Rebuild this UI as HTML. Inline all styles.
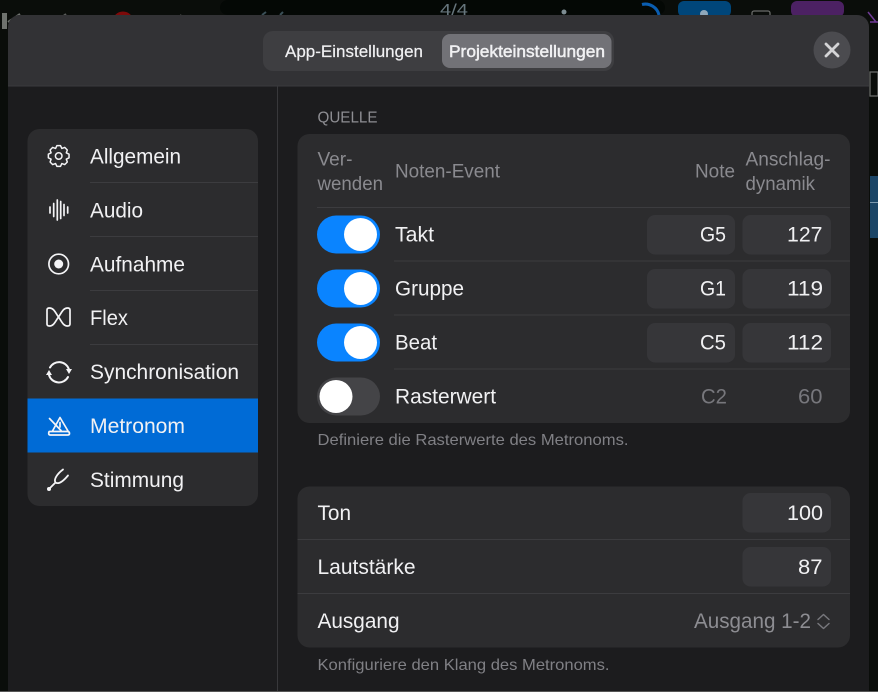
<!DOCTYPE html>
<html lang="de"><head><meta charset="utf-8"><title>Metronom</title>
<style>
html,body{margin:0;padding:0;background:#0a0d0a;width:878px;height:692px;overflow:hidden}
svg{display:block}
text{font-family:"Liberation Sans",Arial,sans-serif;font-size:21px;fill:#f1f1f3}
.g{fill:#8a8a8f;font-size:19px}
.f{fill:#808085;font-size:16px}
.d{fill:#77777c}
.ic{fill:none;stroke:#f4f4f6;stroke-width:1.700;stroke-linecap:round;stroke-linejoin:round}
.sep{stroke:#3c3c3f;stroke-width:1}
</style></head><body>
<svg width="878" height="692" viewBox="0 0 878 692" xmlns="http://www.w3.org/2000/svg">
<rect width="878" height="692" fill="#0a0d0a"/>
<!-- background app toolbar -->
<rect x="2" y="13" width="5" height="16" fill="#6f726e"/>
<path d="M8 22 L20 14" stroke="#6f726e" stroke-width="2" fill="none"/>
<path d="M58 20 L66 14" stroke="#5a5c5a" stroke-width="2" fill="none"/>
<circle cx="123" cy="22" r="10.500" fill="#7d0a0a"/>
<path d="M180 15 L188 21" stroke="#5a5c5a" stroke-width="2" fill="none"/>
<rect x="220" y="0" width="445" height="15" rx="8" fill="#040805"/>
<path d="M262 15 L266 12 M280 15 L283 12" stroke="#3a4f57" stroke-width="2"/>
<text x="440" y="15" style="font-size:16px;fill:#66757c" textLength="28" lengthAdjust="spacingAndGlyphs">4/4</text>
<circle cx="564" cy="12" r="2.500" fill="#7d8c92"/>
<path d="M642 4.500 A14 14 0 0 1 659 15" stroke="#0a5db0" stroke-width="3" fill="none"/>
<rect x="678" y="1" width="53" height="16" rx="6" fill="#00467a"/>
<circle cx="704" cy="14" r="4" fill="#8fa8bb"/>
<rect x="752" y="11" width="18" height="8" rx="2" fill="none" stroke="#6a6c6a" stroke-width="1.300"/>
<rect x="791" y="1" width="53" height="16" rx="6" fill="#4c2163"/>
<path d="M868 12 L876 22 M870 22 H878" stroke="#6f3a96" stroke-width="1.500" fill="none"/>
<rect x="870" y="72" width="8" height="24" fill="none" stroke="#6a6c6a" stroke-width="1.300"/>
<rect x="870" y="176" width="8" height="62" fill="#1b4566"/>
<rect x="870" y="202" width="8" height="1" fill="#7b98ad"/>
<!-- modal -->
<path d="M8 691V27a12 12 0 0 1 12-12H857a12 12 0 0 1 12 12V691Z" fill="#1c1c1e"/>
<path d="M8 85.500V27a12 12 0 0 1 12-12H857a12 12 0 0 1 12 12V85.500Z" fill="#323235"/>
<rect x="8" y="85.500" width="861" height="1" fill="#3a3a3d"/>
<rect x="277" y="86" width="1" height="605" fill="#38383b"/>
<rect x="0" y="691" width="878" height="1" fill="#565656"/>
<!-- segmented -->
<rect x="263" y="31" width="351" height="40" rx="10" fill="#3e3e41"/>
<rect x="442" y="34" width="169.500" height="34" rx="8" fill="#727277"/>
<text x="285" y="57" style="font-size:17px;stroke:#f1f1f3;stroke-width:.2" textLength="138" lengthAdjust="spacingAndGlyphs">App-Einstellungen</text>
<text x="449" y="57" style="font-size:17px;stroke:#f1f1f3;stroke-width:.5" textLength="156" lengthAdjust="spacingAndGlyphs">Projekteinstellungen</text>
<circle cx="832" cy="50" r="18.500" fill="#4b4b4f"/>
<path d="M826 44 L838 56 M838 44 L826 56" stroke="#d4d4d6" stroke-width="2.800" stroke-linecap="round"/>
<!-- sidebar -->
<rect x="27.500" y="129" width="230.500" height="377" rx="12" fill="#2c2c2e"/>
<path d="M27.500 398.500H258V452.500H27.500Z" fill="#006bd6"/>
<path class="sep" d="M90 182.500H258M90 236.500H258M90 290.500H258M90 344.500H258"/>
<g transform="translate(58.700 156)" class="ic" style="stroke-width:1.500">
<path d="M-1.820-10.340L1.820-10.340L3.140-7.580L6.020-8.600L8.600-6.020L7.580-3.140L10.340-1.820L10.340 1.820L7.580 3.140L8.600 6.020L6.020 8.600L3.140 7.580L1.820 10.340L-1.820 10.340L-3.140 7.580L-6.020 8.600L-8.600 6.020L-7.580 3.140L-10.340 1.820L-10.340-1.820L-7.580-3.140L-8.600-6.020L-6.020-8.600L-3.140-7.580Z"/>
<circle r="3.300"/>
</g>
<path class="ic" d="M50 207V213M53.700 203.500V216.500M57.300 200V220M60.700 201.500V218.500M64 204.500V215.500M67.700 207V213"/>
<circle cx="58.700" cy="264" r="9.800" class="ic" style="stroke-width:1.700"/>
<circle cx="58.700" cy="264" r="4.500" fill="#f4f4f6"/>
<path class="ic" d="M47 310Q47 308 49.500 308C54 308 55.500 313 58.500 317C61.500 321 63 326 67.500 326Q70 326 70 324V310Q70 308 67.500 308C63 308 61.500 313 58.500 317C55.500 321 54 326 49.500 326Q47 326 47 324Z"/>
<path class="ic" style="stroke-width:2" d="M50 367.500A10.300 10.300 0 0 1 68.800 369M68 377A10.300 10.300 0 0 1 49 375"/>
<path fill="#f4f4f6" d="M66 369H72L69 374ZM46 375H52L49 370Z"/>
<path class="ic" d="M52.500 431L60 417.500L68 431M49.500 431.500H67.500Q69.500 431.500 69.500 433.500Q69.500 435 67.500 435H50.500Q48.700 435 48.700 433.500Q48.700 431.500 49.500 431.500ZM49.500 418.500L61 430.500M60 422.500V427"/>
<path class="ic" style="stroke-width:1.800" d="M49 489L55.500 482.500C53.500 479.500 57 474 63 469.500M55.500 482.500C58.500 484.500 63 481.500 68 475.500"/>
<circle cx="49" cy="489" r="2" fill="#f4f4f6"/>
<text x="90" y="163.500" textLength="91" lengthAdjust="spacingAndGlyphs">Allgemein</text>
<text x="90" y="217.500" textLength="53" lengthAdjust="spacingAndGlyphs">Audio</text>
<text x="90" y="271.500" textLength="95" lengthAdjust="spacingAndGlyphs">Aufnahme</text>
<text x="90" y="325" textLength="38" lengthAdjust="spacingAndGlyphs">Flex</text>
<text x="90" y="379" textLength="149" lengthAdjust="spacingAndGlyphs">Synchronisation</text>
<text x="90" y="433" textLength="95" lengthAdjust="spacingAndGlyphs">Metronom</text>
<text x="90" y="487" textLength="94" lengthAdjust="spacingAndGlyphs">Stimmung</text>
<!-- card 1 -->
<text x="317.500" y="122.500" style="font-size:16px;fill:#8e8e93" textLength="60" lengthAdjust="spacingAndGlyphs">QUELLE</text>
<rect x="297.500" y="134" width="552.500" height="289" rx="12" fill="#2c2c2e"/>
<path class="sep" d="M317 207.500H850M394 261H850M394 315H850M394 369H850"/>
<text class="g" x="317.500" y="165.500" textLength="35" lengthAdjust="spacingAndGlyphs">Ver-</text>
<text class="g" x="317.500" y="190" textLength="65.500" lengthAdjust="spacingAndGlyphs">wenden</text>
<text class="g" x="395" y="177.500" textLength="105" lengthAdjust="spacingAndGlyphs">Noten-Event</text>
<text class="g" x="695" y="177.500" textLength="40" lengthAdjust="spacingAndGlyphs">Note</text>
<text class="g" x="745.500" y="165.500" textLength="85" lengthAdjust="spacingAndGlyphs">Anschlag-</text>
<text class="g" x="745.500" y="190" textLength="69.500" lengthAdjust="spacingAndGlyphs">dynamik</text>
<!-- toggles -->
<rect x="317" y="215.500" width="63" height="38" rx="19" fill="#0a84ff"/><circle cx="360.500" cy="234.500" r="16.500" fill="#fff"/>
<rect x="317" y="269.500" width="63" height="38" rx="19" fill="#0a84ff"/><circle cx="360.500" cy="288.500" r="16.500" fill="#fff"/>
<rect x="317" y="323.500" width="63" height="38" rx="19" fill="#0a84ff"/><circle cx="360.500" cy="342.500" r="16.500" fill="#fff"/>
<rect x="317" y="377.500" width="63" height="38" rx="19" fill="#444447"/><circle cx="336" cy="396.500" r="16.500" fill="#fff"/>
<text x="395" y="241.500" textLength="39" lengthAdjust="spacingAndGlyphs">Takt</text>
<text x="395" y="295.500" textLength="69" lengthAdjust="spacingAndGlyphs">Gruppe</text>
<text x="395" y="349.500" textLength="42" lengthAdjust="spacingAndGlyphs">Beat</text>
<text x="395" y="403.500" textLength="101" lengthAdjust="spacingAndGlyphs">Rasterwert</text>
<!-- inputs -->
<g fill="#363639">
<rect x="647" y="215" width="88" height="39.500" rx="8"/><rect x="742.500" y="215" width="88.500" height="39.500" rx="8"/>
<rect x="647" y="269" width="88" height="39.500" rx="8"/><rect x="742.500" y="269" width="88.500" height="39.500" rx="8"/>
<rect x="647" y="323" width="88" height="39.500" rx="8"/><rect x="742.500" y="323" width="88.500" height="39.500" rx="8"/>
</g>
<text x="700" y="241.500" textLength="26" lengthAdjust="spacingAndGlyphs">G5</text>
<text x="787" y="241.500" textLength="35.500" lengthAdjust="spacingAndGlyphs">127</text>
<text x="700" y="295.500" textLength="26" lengthAdjust="spacingAndGlyphs">G1</text>
<text x="787" y="295.500" textLength="36" lengthAdjust="spacingAndGlyphs">119</text>
<text x="700" y="349.500" textLength="26" lengthAdjust="spacingAndGlyphs">C5</text>
<text x="787" y="349.500" textLength="36" lengthAdjust="spacingAndGlyphs">112</text>
<text class="d" x="701" y="403.500" textLength="26" lengthAdjust="spacingAndGlyphs">C2</text>
<text class="d" x="798" y="403.500" textLength="24.500" lengthAdjust="spacingAndGlyphs">60</text>
<text class="f" x="317.500" y="445" textLength="311" lengthAdjust="spacingAndGlyphs">Definiere die Rasterwerte des Metronoms.</text>
<!-- card 2 -->
<rect x="297.500" y="486.500" width="552.500" height="161" rx="12" fill="#2c2c2e"/>
<rect x="742.500" y="493" width="88.500" height="39.500" rx="8" fill="#363639"/>
<rect x="742.500" y="547" width="88.500" height="39.500" rx="8" fill="#363639"/>
<path class="sep" d="M297.500 539.500H850M297.500 593.500H850"/>
<text x="317.500" y="520" textLength="33.500" lengthAdjust="spacingAndGlyphs">Ton</text>
<text x="317.500" y="574" textLength="98" lengthAdjust="spacingAndGlyphs">Lautstärke</text>
<text x="317.500" y="628" textLength="82" lengthAdjust="spacingAndGlyphs">Ausgang</text>
<text x="787" y="520" textLength="36" lengthAdjust="spacingAndGlyphs">100</text>
<text x="798" y="574" textLength="24.500" lengthAdjust="spacingAndGlyphs">87</text>
<text x="694" y="628" textLength="117" lengthAdjust="spacingAndGlyphs" style="fill:#8d8d92">Ausgang 1-2</text>
<path d="M818 619.500L823.500 614.500L829 619.500M818 623.500L823.500 628.500L829 623.500" fill="none" stroke="#77777c" stroke-width="1.500" stroke-linecap="round" stroke-linejoin="round"/>
<text class="f" x="317.500" y="670" textLength="292" lengthAdjust="spacingAndGlyphs">Konfiguriere den Klang des Metronoms.</text>
</svg>
</body></html>
